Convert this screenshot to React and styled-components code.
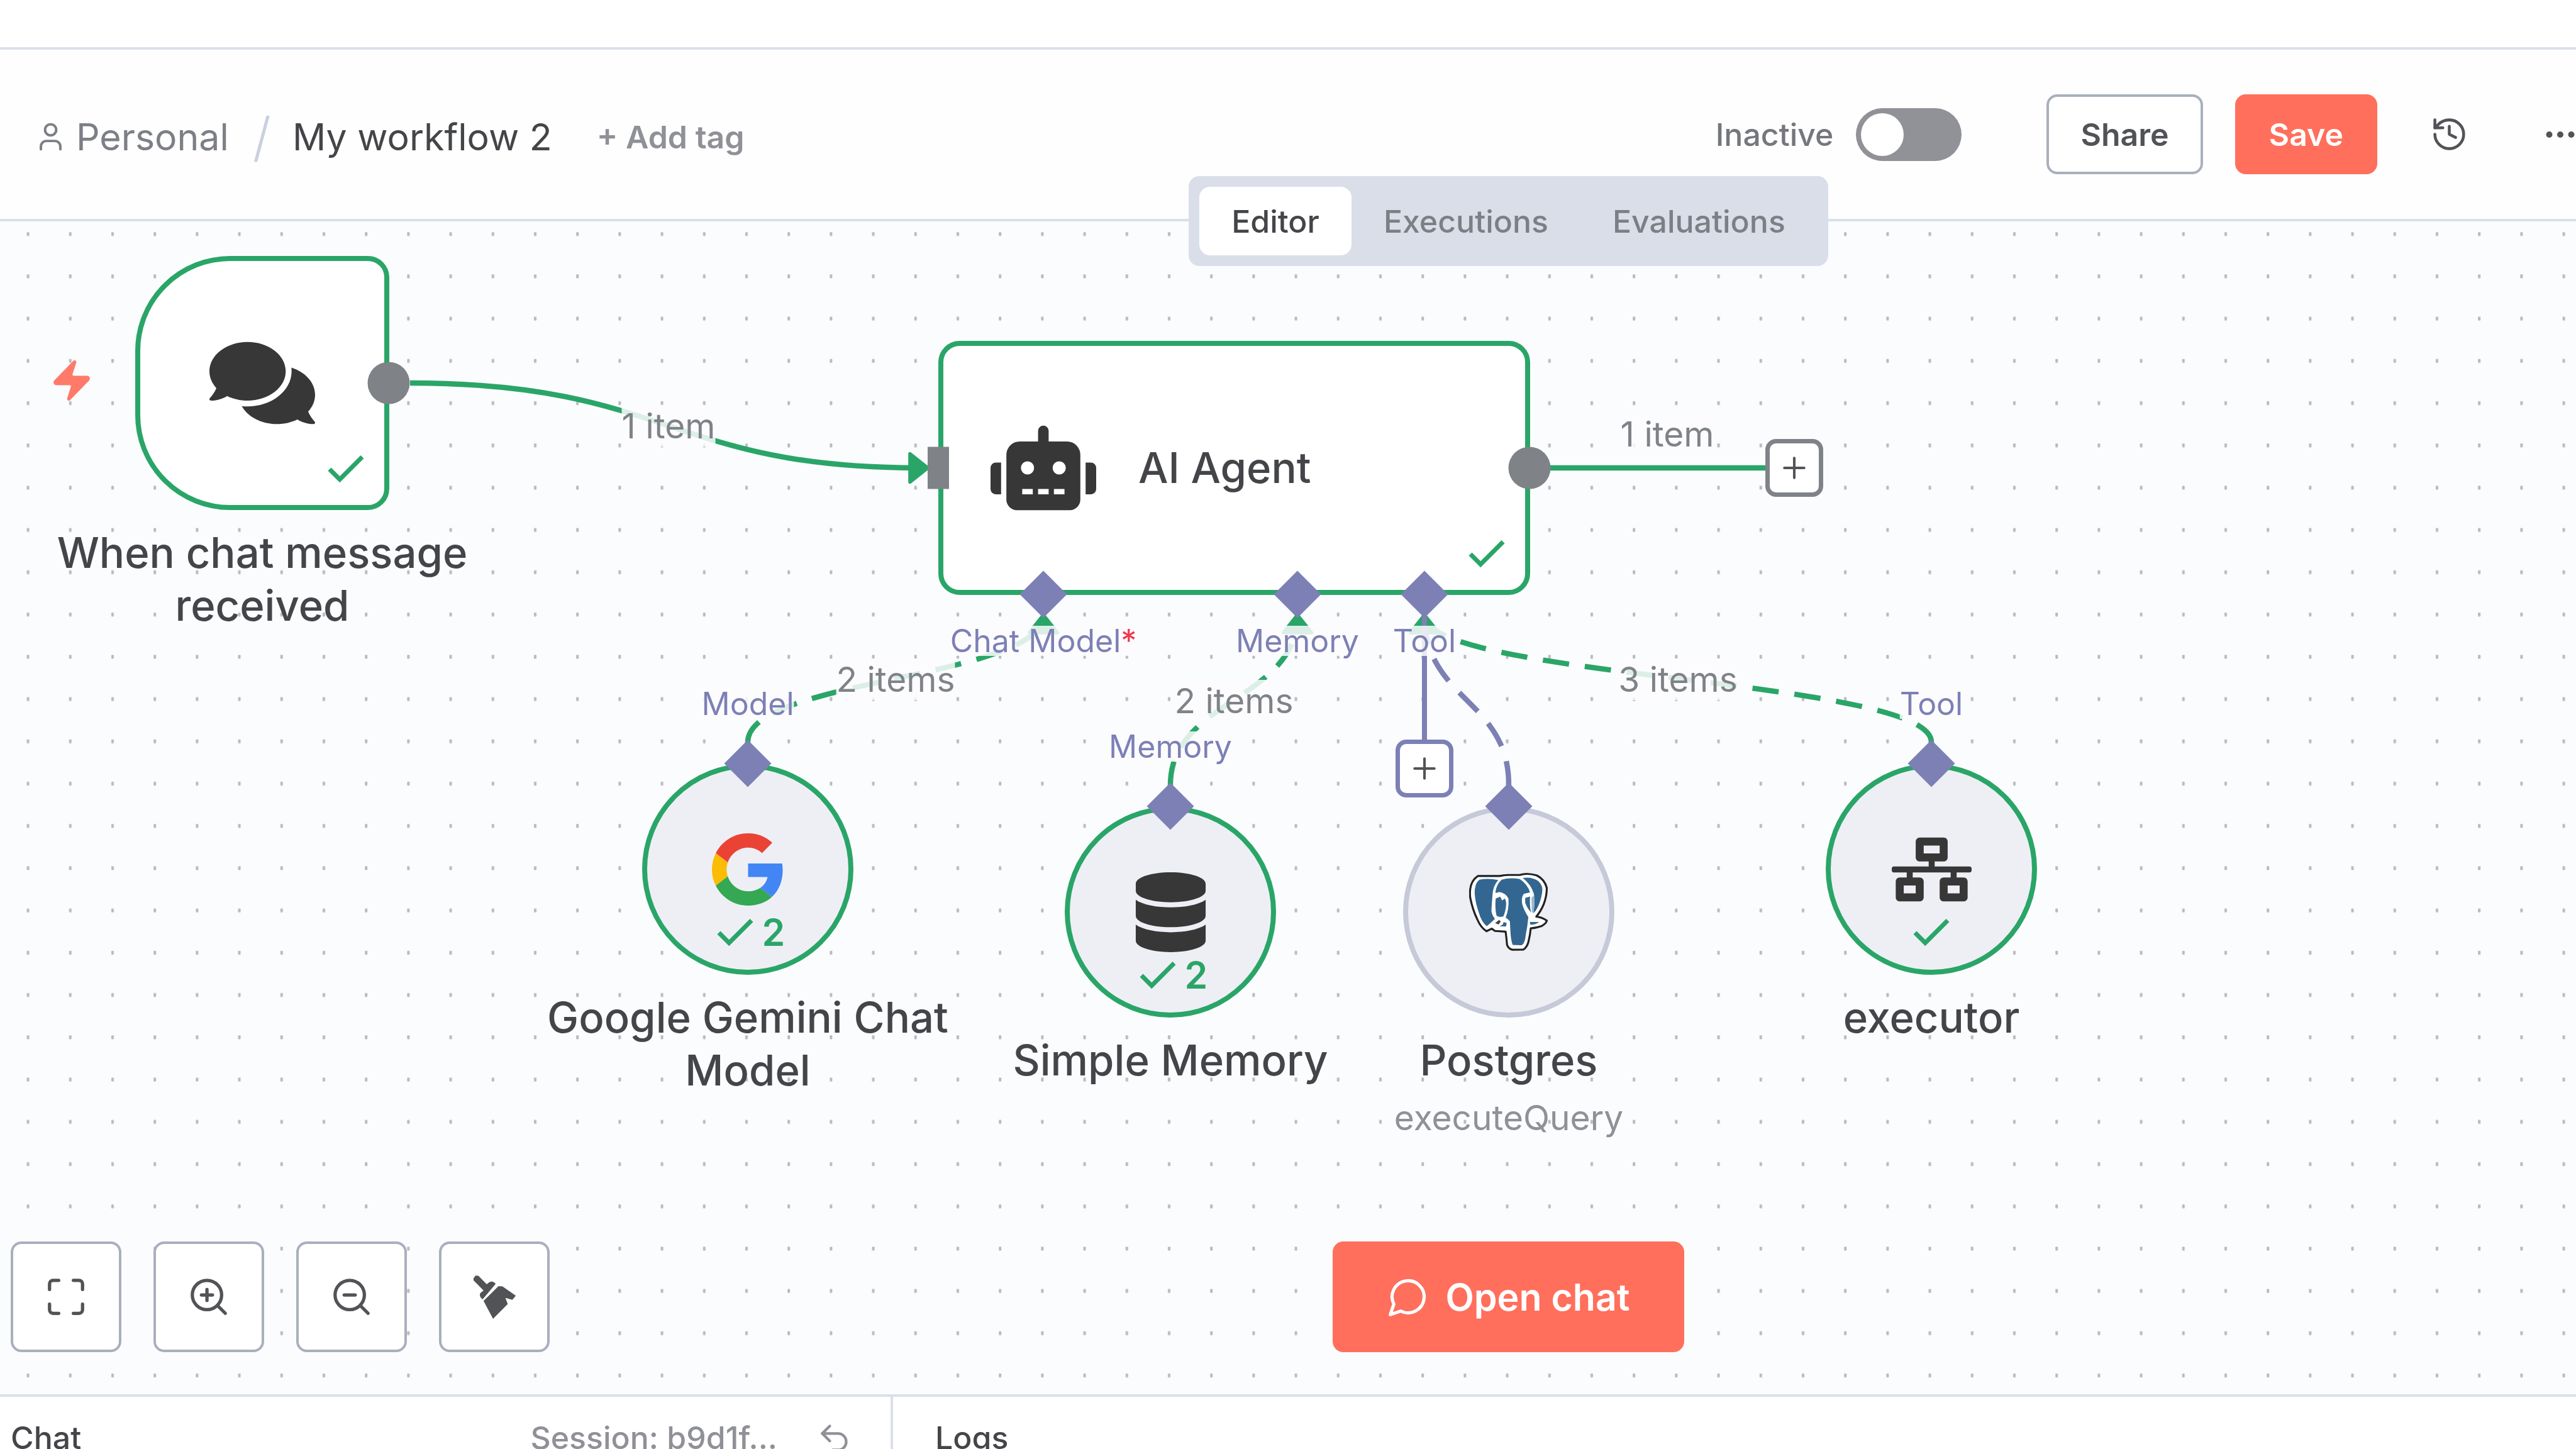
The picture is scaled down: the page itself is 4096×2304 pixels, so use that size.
import React from "react";
import styled, { createGlobalStyle } from "styled-components";
import { User, History, Ellipsis, Maximize, ZoomIn, ZoomOut, Undo2, Check, Plus } from "lucide-react";
import { FaComments, FaRobot, FaDatabase, FaNetworkWired } from "react-icons/fa";

const c = {
  green: "#2aa568",
  purple: "#7d80b5",
  gray: "#7f8287",
  line: "#dadfe9",
  dark: "#444549",
  text: "#525356",
  mid: "#7d7f86",
  light: "#8f9197",
  coral: "#ff6f5c",
  control: "#a9afbc",
  canvas: "#fbfcfe",
};

const GlobalStyle = createGlobalStyle`
  * { box-sizing: border-box; }
  html, body { margin: 0; background: #fff; }
  body, button, input { font-family: Inter, "Liberation Sans", sans-serif; }
  button { margin: 0; padding: 0; border: 0; background: none; cursor: pointer; }
  svg { display: block; flex-shrink: 0; }
`;

const Page = styled.div`
  height: 100vh;
  display: flex;
  flex-direction: column;
  overflow: hidden;
  color: ${c.dark};
  font-size: 50px;
`;

const TopStrip = styled.div`
  flex: 0 0 79px;
  border-bottom: 4px solid ${c.line};
`;

const Header = styled.header`
  position: relative;
  z-index: 2;
  flex: 0 0 273px;
  display: flex;
  align-items: center;
  justify-content: space-between;
  padding-left: 54px;
  background: #fefefe;
  border-bottom: 4px solid ${c.line};
`;

const Breadcrumb = styled.nav`
  display: flex;
  align-items: center;
  padding-top: 8px;
  font-size: 59px;
  line-height: 76px;
  white-space: nowrap;
`;

const ProjectLink = styled.a`
  display: flex;
  align-items: center;
  gap: 14px;
  color: ${c.mid};
  text-decoration: none;
`;

const Slash = styled.span`
  margin: 0 34px 0 38px;
  color: #c9d0df;
  font-size: 84px;
  font-weight: 300;
`;

const AddTag = styled.button`
  margin-left: 71px;
  color: ${c.light};
  font-size: 50px;
  font-weight: 600;
`;

const Actions = styled.div`
  display: flex;
  align-items: center;
  gap: 51px;
  margin-right: -38px;
`;

const Activation = styled.label`
  display: flex;
  align-items: center;
  gap: 36px;
  margin-right: 84px;
  color: #75777d;
  font-weight: 500;
`;

const Switch = styled.input`
  appearance: none;
  width: 168px;
  height: 84px;
  margin: 0;
  padding: 8px;
  border-radius: 42px;
  background: #909297;
  &::before {
    content: "";
    display: block;
    width: 68px;
    height: 68px;
    border-radius: 50%;
    background: #fff;
  }
`;

const HeaderButton = styled.button`
  height: 127px;
  padding: 0 50px;
  border: 4px solid ${(p) => (p.$primary ? c.coral : c.control)};
  border-radius: 17px;
  background: ${(p) => (p.$primary ? c.coral : "#fff")};
  color: ${(p) => (p.$primary ? "#fff" : c.text)};
  font-size: 50px;
  font-weight: 600;
`;

const IconButton = styled.button`
  display: flex;
  align-items: center;
  justify-content: center;
  width: 126px;
  height: 126px;
  color: ${c.text};
`;

const TabsOverlay = styled.div`
  position: absolute;
  left: 701px;
  right: 0;
  top: 201px;
  display: flex;
  justify-content: center;
  pointer-events: none;
`;

const Tabs = styled.div`
  display: flex;
  padding: 17px;
  border-radius: 17px;
  background: #dadee8;
  pointer-events: auto;
`;

const Tab = styled.button`
  height: 109px;
  padding: 0 51px;
  border-radius: 17px;
  background: ${(p) => (p.$active ? "#fff" : "transparent")};
  color: ${(p) => (p.$active ? c.dark : c.mid)};
  font-size: 50px;
  font-weight: 500;
`;

const Canvas = styled.main`
  position: relative;
  flex: 1;
  min-height: 0;
  overflow: hidden;
  background: ${c.canvas};
`;

/* The viewport is panned up by the height of the bars above the canvas. */
const Viewport = styled.div`
  position: absolute;
  inset: -352px 0 0 0;
`;

const Wires = styled.svg`
  position: absolute;
  inset: 0;
  width: 100%;
  height: 100%;
`;

const NodeBox = styled.div`
  position: absolute;
  left: ${(p) => p.$x}px;
  top: ${(p) => p.$y}px;
  width: ${(p) => p.$w}px;
  height: ${(p) => p.$h}px;
  display: flex;
  align-items: center;
  justify-content: ${(p) => (p.$wide ? "flex-start" : "center")};
  gap: 67px;
  padding-left: ${(p) => (p.$wide ? 75 : 0)}px;
  border: 8px solid ${(p) => (p.$idle ? "#c5c9d8" : c.green)};
  border-radius: ${(p) => p.$radius};
  background: ${(p) => (p.$round ? "#eeeff5" : "#fff")};
  color: #373737;
`;

const Title = styled.span`
  font-size: 67px;
  line-height: 84px;
  font-weight: 500;
  color: ${c.dark};
`;

const Caption = styled.div`
  position: absolute;
  left: 50%;
  top: 100%;
  width: 672px;
  margin-top: 34px;
  transform: translateX(-50%);
  text-align: center;
`;

const Subtitle = styled.div`
  margin-top: 16px;
  font-size: 55px;
  line-height: 67px;
  color: ${c.light};
`;

const Status = styled.div`
  position: absolute;
  ${(p) => (p.$corner ? "right: 22px; bottom: 18px;" : "left: 0; right: 0; bottom: 20px;")}
  display: flex;
  align-items: center;
  justify-content: center;
  gap: 4px;
  color: ${c.green};
  font-size: 59px;
  line-height: 78px;
  font-weight: 600;
`;

const Pin = styled.span`
  position: absolute;
  left: ${(p) => p.$x}px;
  top: ${(p) => p.$y}px;
  transform: translate(-50%, -50%) ${(p) => (p.$kind === "diamond" ? "rotate(45deg)" : "")};
  width: ${(p) => (p.$kind === "diamond" ? 53 : p.$kind === "bar" ? 34 : 67)}px;
  height: ${(p) => (p.$kind === "diamond" ? 53 : 67)}px;
  border-radius: ${(p) => (p.$kind === "dot" ? "50%" : "0")};
  background: ${(p) => (p.$kind === "diamond" ? c.purple : c.gray)};
`;

const CanvasLabel = styled.span`
  position: absolute;
  left: ${(p) => p.$x}px;
  top: ${(p) => p.$y}px;
  transform: translate(-50%, -50%);
  white-space: nowrap;
  background: rgba(251, 252, 254, 0.85);
  font-size: ${(p) => (p.$port ? 50 : 55)}px;
  line-height: ${(p) => (p.$port ? 48 : 66)}px;
  color: ${(p) => (p.$port ? c.purple : c.gray)};
`;

const Required = styled.span`
  color: #f0384e;
`;

const AddNode = styled.button`
  position: absolute;
  left: ${(p) => p.$x}px;
  top: ${(p) => p.$y}px;
  transform: translate(-50%, -50%);
  display: flex;
  align-items: center;
  justify-content: center;
  width: 92px;
  height: 92px;
  border: 7px solid ${(p) => p.$color};
  border-radius: 17px;
  background: #fff;
  color: ${c.text};
`;

const TriggerBolt = styled.svg`
  position: absolute;
  left: 77px;
  top: 568px;
`;

const Controls = styled.div`
  position: absolute;
  left: 17px;
  bottom: 67px;
  display: flex;
  gap: 51px;
`;

const ControlButton = styled.button`
  display: flex;
  align-items: center;
  justify-content: center;
  width: 176px;
  height: 176px;
  border: 4px solid ${c.control};
  border-radius: 17px;
  background: #fff;
  color: ${c.text};
`;

const ChatOverlay = styled.div`
  position: absolute;
  left: 701px;
  right: 0;
  bottom: 67px;
  display: flex;
  justify-content: center;
  pointer-events: none;
`;

const OpenChat = styled.button`
  display: flex;
  align-items: center;
  gap: 25px;
  height: 176px;
  padding: 0 86px;
  border-radius: 17px;
  background: ${c.coral};
  color: #fff;
  font-size: 59px;
  font-weight: 600;
  pointer-events: auto;
`;

const LogsPanel = styled.section`
  flex: 0 0 87px;
  display: grid;
  grid-template-columns: 1420px 1fr;
  align-items: start;
  overflow: hidden;
  border-top: 4px solid ${c.line};
  background: #fff;
`;

const PanelHead = styled.div`
  display: flex;
  align-items: center;
  height: 130px;
  padding: 0 61px 0 ${(p) => (p.$logs ? 67 : 17)}px;
  border-right: ${(p) => (p.$logs ? 0 : 4)}px solid ${c.line};
  font-weight: 500;
`;

const Session = styled.span`
  margin-left: auto;
  margin-right: 62px;
  color: ${c.light};
`;

const ResetButton = styled.button`
  color: ${c.light};
`;

const GoogleLogo = () => (
  <svg width="115" height="115" viewBox="0 0 48 48">
    <path fill="#EA4335" d="M24 9.5c3.54 0 6.71 1.22 9.21 3.6l6.85-6.85C35.9 2.38 30.47 0 24 0 14.62 0 6.51 5.38 2.56 13.22l7.98 6.19C12.43 13.72 17.74 9.5 24 9.5z" />
    <path fill="#4285F4" d="M46.98 24.55c0-1.57-.15-3.09-.38-4.55H24v9.02h12.94c-.58 2.96-2.26 5.48-4.78 7.18l7.73 6c4.51-4.18 7.09-10.36 7.09-17.65z" />
    <path fill="#FBBC05" d="M10.53 28.59c-.48-1.45-.76-2.99-.76-4.59s.27-3.14.76-4.59l-7.98-6.19C.92 16.46 0 20.12 0 24c0 3.88.92 7.54 2.56 10.78l7.97-6.19z" />
    <path fill="#34A853" d="M24 48c6.48 0 11.93-2.13 15.89-5.81l-7.73-6c-2.15 1.45-4.92 2.3-8.16 2.3-6.26 0-11.57-4.22-13.47-9.91l-7.98 6.19C6.51 42.62 14.62 48 24 48z" />
  </svg>
);

const PostgresLogo = () => (
  <svg width="126" height="126" viewBox="93 120 558 558">
    <path
      d="M155 146 L310 146 Q340 137 380 139 L450 139 Q500 122 570 142 Q625 170 640 230 Q640 290 618 345 Q600 390 566 432 Q605 436 640 460 Q636 482 600 500 Q565 512 527 515 Q522 565 510 612 Q500 648 475 664 L395 665 Q368 655 360 630 Q356 580 350 538 L275 533 L252 517 L215 535 Q175 510 150 450 Q118 385 101 300 Q88 190 155 146Z"
      fill="#fff"
      stroke="#222"
      strokeWidth="14"
      strokeLinejoin="round"
    />
    <g fill="#336791">
      <path d="M165 172 Q230 160 298 174 Q262 215 258 275 Q252 340 250 395 Q258 430 275 448 Q242 480 217 500 Q180 470 160 400 Q138 340 132 270 Q130 200 165 172Z" />
      <path d="M280 305 L312 292 L325 318 L345 305 Q358 330 352 365 Q350 390 335 430 Q300 440 286 425 Q274 380 280 305Z" />
      <path d="M322 172 Q380 155 450 168 Q505 205 522 262 L478 272 Q458 300 467 345 Q480 390 510 435 Q504 500 492 560 Q485 628 460 634 L400 632 Q387 600 384 540 L380 465 Q362 445 350 440 Q375 380 370 305 Q350 265 305 258 Q285 268 278 262 Q285 205 322 172Z" />
      <path d="M470 160 Q535 150 580 182 Q618 215 606 270 Q595 340 562 390 L546 408 Q556 340 550 275 Q530 205 470 160Z" />
      <path d="M488 300 L522 290 Q518 350 528 402 Q500 370 488 335Z" />
      <path d="M520 470 L586 470 Q565 488 525 490Z" />
      <path d="M308 500 L330 488 L336 470 L358 478 L352 502Z" />
    </g>
    <path d="M276 478 L304 455 L316 466 L300 488Z" fill="#444" />
    <path d="M546 285 L532 300 L534 400 L546 408 Q556 340 550 285Z" fill="#9db7cb" />
  </svg>
);

const BroomIcon = () => (
  <svg width="71" height="71" viewBox="240 235 310 310" fill="currentColor">
    <path d="M247 262 L262 240 L282 242 L340 300 L362 284 Q385 276 402 298 L312 405 Q284 385 296 362 L318 344 L250 275Z" />
    <path d="M422 314 L450 316 L542 380 L518 409 L470 396 L486 438 L384 541 L318 416Z" />
  </svg>
);

const ChatBubble = () => (
  <svg width="68" height="68" viewBox="0 0 24 24" fill="none" stroke="currentColor" strokeWidth="1.8" strokeLinecap="round" strokeLinejoin="round">
    <path d="M7.9 20A9 9 0 1 0 4 16.1L2 22Z" />
  </svg>
);

const Done = ({ count, corner }) => (
  <Status $corner={corner}>
    <Check size={78} strokeWidth={2.2} strokeLinecap="butt" strokeLinejoin="miter" />
    {count}
  </Status>
);

const SIDE = 404;
const LEAF = 336;

const leaves = [
  { name: "Google Gemini Chat Model", x: 1189, y: 1382, port: "Model", icon: <GoogleLogo />, count: 2 },
  { name: "Simple Memory", x: 1861, y: 1450, port: "Memory", icon: <FaDatabase size={127} />, count: 2 },
  { name: "Postgres", sub: "executeQuery", x: 2399, y: 1450, icon: <PostgresLogo />, idle: true },
  { name: "executor", x: 3071, y: 1382, port: "Tool", icon: <FaNetworkWired size={127} /> },
];

const inputs = [
  { name: "Chat Model", x: 1659, required: true },
  { name: "Memory", x: 2063 },
  { name: "Tool", x: 2265 },
];

const rise = (x1, y1, x2) => {
  const mid = (y1 + 978) / 2;
  return `M${x1} ${y1} C${x1} ${mid} ${x2} ${mid} ${x2} 978`;
};

const Arrow = ({ x, y, turn }) => (
  <polygon
    points="-5,-4 0,0 -5,4"
    transform={`translate(${x} ${y}) rotate(${turn}) scale(5.6)`}
    fill={c.green}
    stroke={c.green}
    strokeLinejoin="round"
  />
);

const WireLayer = () => (
  <Wires aria-hidden="true">
    <defs>
      <pattern id="dots" x="10.8" y="338.2" width="67.2" height="67.22" patternUnits="userSpaceOnUse">
        <rect x="31.8" y="31" width="4" height="6" rx="1" fill="#b9babd" />
      </pattern>
    </defs>
    <rect width="100%" height="100%" fill="url(#dots)" />
    <g fill="none" stroke={c.green} strokeWidth="8.4">
      <path d="M652 609 C1063 609 1063 744 1462 744" />
      <path d="M2465 744 H2810" />
      <g strokeDasharray="33.6 33.6" strokeLinecap="square">
        <path d={rise(1189, 1180, 1659)} />
        <path d={rise(1861, 1248, 2063)} />
        <path d={rise(3071, 1180, 2265)} />
        <path d={rise(2399, 1248, 2265)} stroke={c.purple} />
      </g>
    </g>
    <Arrow x={1475} y={744} turn={0} />
    {inputs.map((i) => (
      <Arrow key={i.name} x={i.x} y={978} turn={-90} />
    ))}
    <path d="M2265 978 V1180" stroke={c.purple} strokeWidth="8" />
  </Wires>
);

export default function App() {
  return (
    <Page>
      <GlobalStyle />
      <TopStrip />
      <Header>
        <Breadcrumb aria-label="Breadcrumb">
          <ProjectLink href="#personal">
            <User size={53} strokeWidth={1.8} />
            Personal
          </ProjectLink>
          <Slash>/</Slash>
          <span>My workflow 2</span>
          <AddTag type="button">+ Add tag</AddTag>
        </Breadcrumb>
        <Actions>
          <Activation htmlFor="active">
            Inactive
            <Switch id="active" type="checkbox" role="switch" />
          </Activation>
          <HeaderButton type="button">Share</HeaderButton>
          <HeaderButton type="button" $primary>Save</HeaderButton>
          <IconButton type="button" aria-label="History">
            <History size={61} strokeWidth={1.8} />
          </IconButton>
          <IconButton type="button" aria-label="More">
            <Ellipsis size={60} />
          </IconButton>
        </Actions>
        <TabsOverlay>
          <Tabs>
            <Tab type="button" $active>Editor</Tab>
            <Tab type="button">Executions</Tab>
            <Tab type="button">Evaluations</Tab>
          </Tabs>
        </TabsOverlay>
      </Header>

      <Canvas>
        <Viewport>
          <WireLayer />

          <TriggerBolt width="74" height="74" viewBox="0 0 24 24" fill="#ff7a69" stroke="#ff7a69" strokeWidth="0.8">
            <path d="M4 14a1 1 0 0 1-.78-1.63l9.9-10.2a.5.5 0 0 1 .86.46l-1.92 6.02A1 1 0 0 0 13 10h7a1 1 0 0 1 .78 1.63l-9.9 10.2a.5.5 0 0 1-.86-.46l1.92-6.02A1 1 0 0 0 11 14z" />
          </TriggerBolt>
          <NodeBox $x={215} $y={407} $w={SIDE} $h={SIDE} $radius="151px 34px 34px 151px">
            <FaComments size={168} />
            <Done corner />
            <Caption><Title>When chat message received</Title></Caption>
          </NodeBox>
          <Pin $kind="dot" $x={618} $y={609} />

          <NodeBox $x={1492} $y={542} $w={941} $h={SIDE} $radius="34px" $wide>
            <FaRobot size={168} />
            <Title>AI Agent</Title>
            <Done corner />
          </NodeBox>
          <Pin $kind="bar" $x={1492} $y={744} />
          <Pin $kind="dot" $x={2432} $y={744} />

          {leaves.map((n) => (
            <NodeBox
              key={n.name}
              $x={n.x - LEAF / 2}
              $y={n.y - LEAF / 2}
              $w={LEAF}
              $h={LEAF}
              $radius="50%"
              $round
              $idle={n.idle}
            >
              {n.icon}
              {!n.idle && <Done count={n.count} />}
              <Caption>
                <Title>{n.name}</Title>
                {n.sub && <Subtitle>{n.sub}</Subtitle>}
              </Caption>
            </NodeBox>
          ))}
          {leaves.map((n) => (
            <Pin key={n.name} $kind="diamond" $x={n.x} $y={n.y - LEAF / 2} />
          ))}
          {leaves.filter((n) => n.port).map((n) => (
            <CanvasLabel key={n.name} $port $x={n.x} $y={n.y - 263}>{n.port}</CanvasLabel>
          ))}
          {inputs.map((i) => (
            <CanvasLabel key={i.name} $port $x={i.x} $y={1019}>
              {i.name}
              {i.required && <Required>*</Required>}
            </CanvasLabel>
          ))}
          {inputs.map((i) => (
            <Pin key={i.name} $kind="diamond" $x={i.x} $y={945} />
          ))}

          <CanvasLabel $x={1063} $y={677}>1 item</CanvasLabel>
          <CanvasLabel $x={2651} $y={690}>1 item</CanvasLabel>
          <CanvasLabel $x={1424} $y={1080}>2 items</CanvasLabel>
          <CanvasLabel $x={1962} $y={1114}>2 items</CanvasLabel>
          <CanvasLabel $x={2668} $y={1080}>3 items</CanvasLabel>

          <AddNode type="button" aria-label="Add next node" $x={2853} $y={744} $color={c.gray}>
            <Plus size={54} strokeWidth={1.8} />
          </AddNode>
          <AddNode type="button" aria-label="Add tool" $x={2265} $y={1222} $color={c.purple}>
            <Plus size={54} strokeWidth={1.8} />
          </AddNode>
        </Viewport>

        <Controls>
          <ControlButton type="button" aria-label="Fit to view"><Maximize size={70} strokeWidth={1.8} /></ControlButton>
          <ControlButton type="button" aria-label="Zoom in"><ZoomIn size={70} strokeWidth={1.8} /></ControlButton>
          <ControlButton type="button" aria-label="Zoom out"><ZoomOut size={70} strokeWidth={1.8} /></ControlButton>
          <ControlButton type="button" aria-label="Tidy up"><BroomIcon /></ControlButton>
        </Controls>
        <ChatOverlay>
          <OpenChat type="button">
            <ChatBubble />
            Open chat
          </OpenChat>
        </ChatOverlay>
      </Canvas>

      <LogsPanel>
        <PanelHead>
          Chat
          <Session>Session: b9d1f...</Session>
          <ResetButton type="button" aria-label="Reset session">
            <Undo2 size={57} strokeWidth={1.8} />
          </ResetButton>
        </PanelHead>
        <PanelHead $logs>Logs</PanelHead>
      </LogsPanel>
    </Page>
  );
}
